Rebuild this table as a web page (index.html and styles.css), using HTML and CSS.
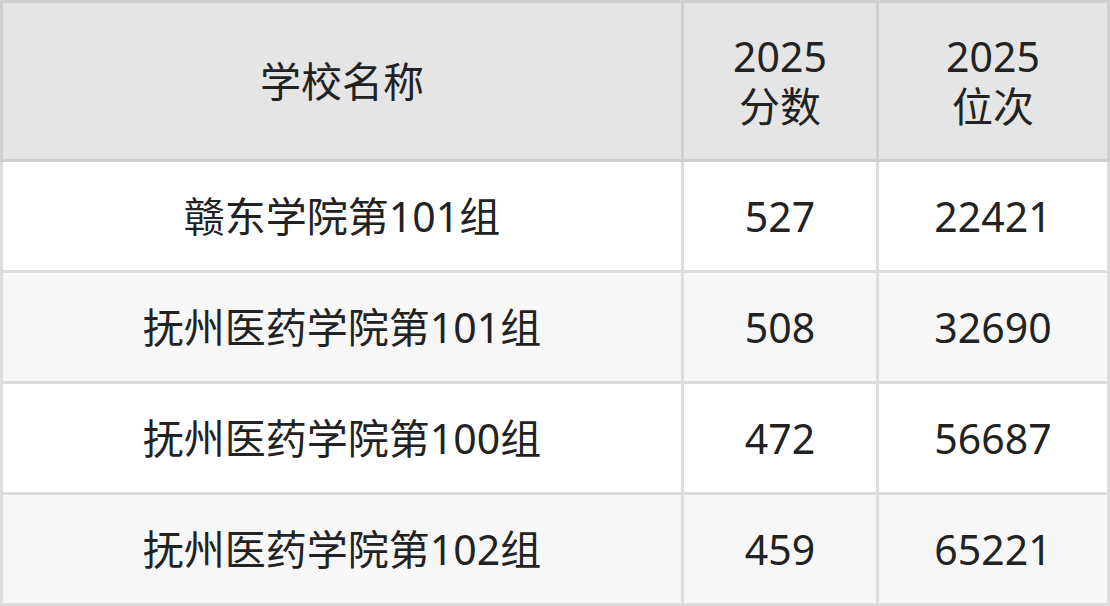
FILE: index.html
```html
<!DOCTYPE html>
<html lang="zh">
<head>
<meta charset="utf-8">
<link rel="stylesheet" href="styles.css">
</head>
<body>
<table class="score-table">
  <thead>
    <tr>
      <th class="col-name">学校名称</th>
      <th class="col-score">2025<br>分数</th>
      <th class="col-rank">2025<br>位次</th>
    </tr>
  </thead>
  <tbody>
    <tr><td>赣东学院第101组</td><td>527</td><td>22421</td></tr>
    <tr><td>抚州医药学院第101组</td><td>508</td><td>32690</td></tr>
    <tr><td>抚州医药学院第100组</td><td>472</td><td>56687</td></tr>
    <tr><td>抚州医药学院第102组</td><td>459</td><td>65221</td></tr>
  </tbody>
</table>
</body>
</html>
```
FILE: styles.css
```css
html, body {
  margin: 0;
  padding: 0;
  background: #ffffff;
}
.score-table {
  width: 1110px;
  border-collapse: collapse;
  table-layout: fixed;
  font-family: "Noto Sans", "Noto Sans CJK SC", sans-serif;
  font-size: 41px;
  color: #222222;
  border: 3px solid #cccccc;
}
.score-table th,
.score-table td {
  border: 3px solid #d6d6d6;
  text-align: center;
  vertical-align: middle;
  padding: 0;
  font-weight: normal;
}
.score-table thead th {
  background: #e5e5e5;
  height: 156px;
  line-height: 50px;
  border-color: #cfcfcf;
}
.score-table .col-name { width: 678px; }
.score-table .col-score { width: 192px; }
.score-table tbody td {
  height: 108px;
  line-height: 48px;
  border-color: #dddddd;
}
.score-table tbody tr:nth-child(even) td {
  background: #f7f7f7;
}
```
